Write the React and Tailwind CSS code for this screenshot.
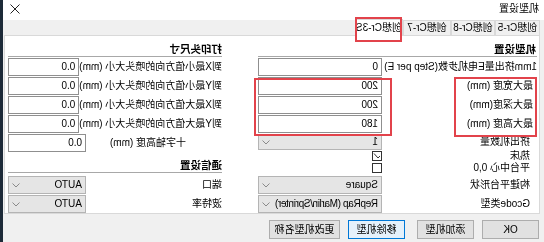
import React from 'react';

// Dialog is shown mirrored in the reference, so the whole window is flipped with -scale-x-100
const TextBox = ({ value, className }) => (
    <div className={`h-[18px] bg-white border border-[#8f8f8f] flex items-center pl-[3px] text-[10px] leading-none ${className}`}>
        {value}
    </div>
);

const Select = ({ value, className, textClass = '' }) => (
    <div className={`bg-[#e5e5e5] border border-[#b4b4b4] flex items-center justify-between pl-[3px] pr-[3px] text-[10px] leading-none overflow-hidden ${className}`}>
        <span className={`whitespace-nowrap ${textClass}`}>{value}</span>
        <svg width="8" height="5" viewBox="0 0 8 5" className="shrink-0">
            <path d="M0.5 0.5 L4 4 L7.5 0.5" fill="none" stroke="#8a8a8a" strokeWidth="1" />
        </svg>
    </div>
);

const Check = ({ checked }) => (
    <div className="w-[10px] h-[10px] border border-[#333] bg-white flex items-center justify-center">
        {checked && (
            <svg width="8" height="8" viewBox="0 0 8 8">
                <path d="M1 4 L3 6 L7 1.5" fill="none" stroke="#333" strokeWidth="1" />
            </svg>
        )}
    </div>
);

const Header = ({ children, className }) => (
    <div className={`border-b border-[#a8a8a8] font-bold text-[10.5px] leading-[12px] ${className}`}>{children}</div>
);

const Row = ({ label, children, className }) => (
    <div className={`flex items-center justify-between ${className}`}>
        <span className="text-[10px] leading-none whitespace-nowrap">{label}</span>
        {children}
    </div>
);

const Tab = ({ children, active, className }) => (
    <div
        className={`flex items-center justify-center whitespace-nowrap text-[10px] leading-none border border-b-0 border-[#d9d9d9] ${active ? 'bg-white h-[17px] z-10' : 'bg-[#f0f0f0] h-[15px]'} ${className}`}
    >
        {children}
    </div>
);

const Button = ({ children, focused, className }) => (
    <div
        className={`h-[19px] flex items-center justify-center text-[10px] leading-none border ${focused ? 'bg-[#e5f1fb] border-[#0078d7]' : 'bg-[#e1e1e1] border-[#adadad]'} ${className}`}
    >
        {children}
    </div>
);

export default function App() {
    return (
        <div className="w-[544px] h-[242px] overflow-hidden bg-[#f0f0f0] text-black font-['Liberation_Sans','Noto_Sans_CJK_SC',sans-serif]">
            <div className="relative w-full h-full flex -scale-x-100">
                {/* window */}
                <div className="w-[541px] h-full flex flex-col">
                    {/* title bar */}
                    <div className="h-[20px] bg-white flex items-start justify-between pl-[5px] pr-[7px] pt-[3px]">
                        <span className="text-[10px] leading-[11px]">机型设置</span>
                        <svg width="10" height="10" viewBox="0 0 10 10" className="mt-[1px]">
                            <path d="M0.5 0.5 L9.5 9.5 M9.5 0.5 L0.5 9.5" stroke="#222" strokeWidth="1" />
                        </svg>
                    </div>

                    {/* tabs */}
                    <div className="h-[15px] flex items-end pl-[4px]">
                        <Tab className="w-[45px]">创想Cr-5</Tab>
                        <Tab className="w-[44px]">创想Cr-8</Tab>
                        <Tab className="w-[48px]">创想Cr-7</Tab>
                        <Tab active className="w-[48px] -mb-[1px]">创想Cr-3S</Tab>
                    </div>

                    {/* tab page */}
                    <div className="ml-[4px] w-[536px] h-[179px] bg-white border border-[#d9d9d9] flex pl-[2px] overflow-hidden">
                        {/* machine settings */}
                        <div className="w-[279px] flex flex-col">
                            <Header className="h-[21px] pt-[7px] pl-[1px]">机型设置</Header>
                            <div className="flex flex-col gap-[1px] mt-[1px]">
                                <Row label="1mm挤出量E电机步数(Step per E)"><TextBox value="0" className="w-[124px]" /></Row>
                                <Row label={<span className="pl-[4px]">最大宽度 (mm)</span>}><TextBox value="200" className="w-[124px]" /></Row>
                                <Row label={<span className="pl-[4px]">最大深度(mm)</span>}><TextBox value="200" className="w-[124px]" /></Row>
                                <Row label={<span className="pl-[4px]">最大高度 (mm)</span>}><TextBox value="180" className="w-[124px]" /></Row>
                            </div>
                            <Row label={<span className="pl-[7px]">挤出机数量</span>} className="mt-[1px]">
                                <Select value="1" className="w-[124px] h-[16px]" />
                            </Row>
                            <Row label={<span className="pl-[7px]">热床</span>} className="h-[12px]">
                                <div className="w-[124px]"><Check checked /></div>
                            </Row>
                            <Row label={<span className="pl-[7px]">平台中心 0,0</span>} className="h-[12px]">
                                <div className="w-[124px]"><Check /></div>
                            </Row>
                            <Row label={<span className="pl-[7px]">构建平台形状</span>} className="mt-[2px]">
                                <Select value="Square" className="w-[124px] h-[18px]" />
                            </Row>
                            <Row label={<span className="pl-[7px]">Gcode类型</span>} className="mt-[1px]">
                                <Select value="RepRap (Marlin/Sprinter)" textClass="tracking-[-0.35px]" className="w-[124px] h-[18px]" />
                            </Row>
                        </div>

                        {/* print head size */}
                        <div className="ml-[36px] w-[214px] flex flex-col">
                            <Header className="h-[21px] pt-[7px]">打印头尺寸</Header>
                            <div className="flex flex-col gap-[1px] mt-[1px]">
                                <Row label="到X最小值方向的喷头大小 (mm)"><TextBox value="0.0" className="w-[78px]" /></Row>
                                <Row label="到Y最小值方向的喷头大小 (mm)"><TextBox value="0.0" className="w-[78px]" /></Row>
                                <Row label="到X最大值方向的喷头大小 (mm)"><TextBox value="0.0" className="w-[78px]" /></Row>
                                <Row label="到Y最大值方向的喷头大小 (mm)"><TextBox value="0.0" className="w-[78px]" /></Row>
                                <Row label={<span className="pl-[36px]">十字轴高度 (mm)</span>}><TextBox value="0.0" className="w-[78px]" /></Row>
                            </div>
                            <Header className="h-[20px] pt-[6px] mt-[1px]">通信设置</Header>
                            <div className="flex flex-col gap-[1px] mt-[3px]">
                                <Row label="端口"><Select value="AUTO" className="w-[78px] h-[18px]" /></Row>
                                <Row label="波特率"><Select value="AUTO" className="w-[78px] h-[18px]" /></Row>
                            </div>
                        </div>
                    </div>

                    {/* buttons */}
                    <div className="flex pl-[5px] pt-[6px] gap-[8px]">
                        <Button className="w-[57px]">OK</Button>
                        <Button className="w-[57px]">添加机型</Button>
                        <Button focused className="w-[57px] ml-[4px]">移除机型</Button>
                        <Button className="w-[71px]">更改机型名称</Button>
                    </div>
                </div>

                {/* background behind the window edge */}
                <div className="w-[3px] h-full bg-[#1d2a38]" />

                {/* red annotation boxes */}
                <div className="absolute left-[142px] top-[17px] w-[47px] h-[25px] border-2 border-[#e2434b] z-20" />
                <div className="absolute left-[7px] top-[77px] w-[83px] h-[60px] border-2 border-[#e2434b] z-20" />
                <div className="absolute left-[152px] top-[78px] w-[138px] h-[58px] border-2 border-[#e2434b] z-20" />
            </div>
        </div>
    );
}
